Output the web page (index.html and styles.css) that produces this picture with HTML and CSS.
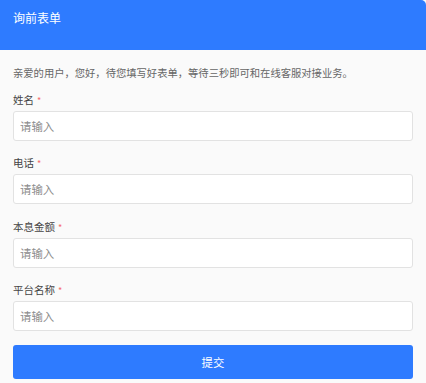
FILE: index.html
```html
<!DOCTYPE html>
<html lang="zh-CN">
<head>
    <meta charset="UTF-8">
    <meta name="viewport" content="width=device-width, initial-scale=1.0">
    <title>询前表单</title>
    <link rel="stylesheet" href="styles.css">
</head>
<body>
    <div class="card">
        <div class="card-header">询前表单</div>
        <form class="card-body" id="inquiryForm">
            <p class="intro">亲爱的用户，您好，待您填写好表单，等待三秒即可和在线客服对接业务。</p>
            <div class="field">
                <label for="name">姓名<span class="req">*</span></label>
                <input type="text" id="name" placeholder="请输入">
            </div>
            <div class="field">
                <label for="phone">电话<span class="req">*</span></label>
                <input type="text" id="phone" placeholder="请输入">
            </div>
            <div class="field">
                <label for="amount">本息金额<span class="req">*</span></label>
                <input type="text" id="amount" placeholder="请输入">
            </div>
            <div class="field">
                <label for="platform">平台名称<span class="req">*</span></label>
                <input type="text" id="platform" placeholder="请输入">
            </div>
            <button type="submit">提交</button>
        </form>
    </div>
</body>
</html>
```

FILE: styles.css
```css
html, body {
    margin: 0;
    padding: 0;
    background-color: #fafafa;
}
body {
    font-family: "Noto Sans CJK SC", "Noto Sans", sans-serif;
    width: 426px;
    height: 383px;
    overflow: hidden;
}
.card {
    background-color: #fafafa;
    border-top-right-radius: 5px;
    overflow: hidden;
}
.card-header {
    height: 50px;
    box-sizing: border-box;
    padding: 9px 13px 0;
    background-color: #2e7bff;
    color: #fff;
    font-size: 12px;
    line-height: 17px;
}
.card-body {
    display: flex;
    flex-direction: column;
    padding: 14px 13px 0;
    margin: 0;
}
.intro {
    margin: 0 0 10px;
    font-size: 10.3px;
    line-height: 17px;
    color: #666;
}
.field {
    display: flex;
    flex-direction: column;
    gap: 2px;
    margin-bottom: 13.3px;
}
.field label {
    font-size: 10.5px;
    line-height: 17px;
    color: #444;
}
.req {
    color: #f56c6c;
    margin-left: 3px;
    font-size: 9px;
}
.field input {
    box-sizing: border-box;
    width: 400px;
    height: 30px;
    padding: 0 6px;
    border: 1px solid #e2e2e2;
    border-radius: 3px;
    background-color: #fff;
    font-family: inherit;
    font-size: 11.4px;
    color: #333;
    outline: none;
}
.field input::placeholder {
    color: #8c8c8c;
}
button {
    box-sizing: border-box;
    width: 400px;
    height: 34px;
    margin-top: 0.5px;
    border: none;
    border-radius: 3px;
    background-color: #2e7bff;
    color: #fff;
    font-family: inherit;
    font-size: 11.4px;
    cursor: pointer;
}
```
